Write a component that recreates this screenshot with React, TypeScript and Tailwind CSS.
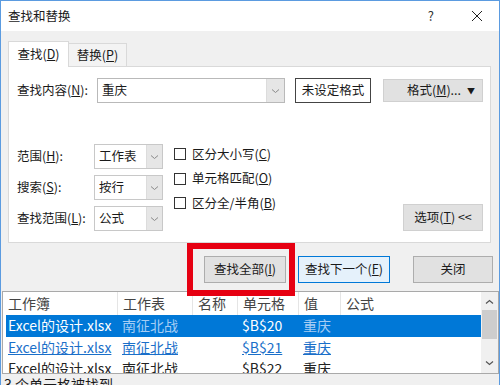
import React from 'react';

const font = "font-['Microsoft_YaHei','Noto_Sans_CJK_SC',sans-serif]";

function Chevron({ className = '' }: { className?: string }) {
  return (
    <svg width="9" height="6" viewBox="0 0 9 6" className={className}>
      <path d="M1 1.5 L4.5 4.5 L8 1.5" fill="none" stroke="#8a8a8a" strokeWidth="1" />
    </svg>
  );
}

function Select({ value }: { value: string }) {
  return (
    <div className="flex h-[25px] w-[69px] border border-[#c8c8c8] bg-white">
      <div className="flex flex-1 items-center pl-[4px] text-[12.5px]">{value}</div>
      <div className="flex w-[16px] items-center justify-center border-l border-[#dcdcdc] bg-[#e6e6e6]">
        <Chevron />
      </div>
    </div>
  );
}

function Check({ children }: { children: React.ReactNode }) {
  return (
    <div className="flex h-[24.5px] items-center gap-[6px]">
      <div className="h-[12px] w-[12px] border border-[#333] bg-white" />
      <span className="text-[12.5px]">{children}</span>
    </div>
  );
}

const rows = [
  { file: 'Excel的设计.xlsx', sheet: '南征北战', cell: '$B$20', value: '重庆', kind: 'sel' },
  { file: 'Excel的设计.xlsx', sheet: '南征北战', cell: '$B$21', value: '重庆', kind: 'link' },
  { file: 'Excel的设计.xlsx', sheet: '南征北战', cell: '$B$22', value: '重庆', kind: 'plain' },
];

const cols = 'grid grid-cols-[111px_75px_45px_61px_42px_1fr]';

export default function App() {
  return (
    <div className={`relative flex h-[385px] w-[500px] flex-col overflow-hidden border-x border-t border-[#5b9be0] bg-[#f0f0f0] text-[#1a1a1a] ${font}`}>
      {/* Title bar */}
      <div className="flex h-[30px] shrink-0 items-center bg-white pl-[7px]">
        <span className="text-[12.5px]">查找和替换</span>
        <span className="ml-auto text-[13px] text-[#333]">?</span>
        <svg width="12" height="12" viewBox="0 0 12 12" className="ml-[37px] mr-[16px]">
          <path d="M1 1 L11 11 M11 1 L1 11" stroke="#222" strokeWidth="1" />
        </svg>
      </div>

      {/* Tabs */}
      <div className="flex shrink-0 items-end pl-[7px] pt-[10px]">
        <div className="relative z-10 -mb-px flex h-[26px] w-[61px] items-center justify-center border-x border-t border-[#d9d9d9] bg-white text-[12.5px]">
          查找(<u>D</u>)
        </div>
        <div className="flex h-[23px] w-[58px] items-center justify-center border-r border-t border-[#d9d9d9] bg-[#f3f3f3] text-[12.5px]">
          替换(<u>P</u>)
        </div>
      </div>

      {/* Panel */}
      <div className="ml-[7px] mr-[8px] flex h-[177px] shrink-0 flex-col border border-[#d9d9d9] bg-white pl-[8px] pr-[7px]">
        <div className="mt-[11px] flex items-center">
          <span className="w-[80px] text-[12.5px]">查找内容(<u>N</u>):</span>
          <div className="flex h-[25px] w-[188px] border border-[#b9b9b9] bg-white">
            <div className="flex flex-1 items-center pl-[4px] text-[12.5px]">重庆</div>
            <div className="flex w-[18px] items-center justify-center border-l border-[#dcdcdc] bg-[#e6e6e6]">
              <Chevron />
            </div>
          </div>
          <div className="ml-[10px] flex h-[25px] w-[76px] items-center justify-center border border-[#444] bg-white text-[12.5px]">
            未设定格式
          </div>
          <div className="ml-auto flex h-[23px] w-[100px] items-center border border-[#d0d0d0] bg-[#e1e1e1] pl-[23px] pr-[7px] text-[12.5px]">
            <span>格式(<u>M</u>)...</span>
            <span className="ml-auto text-[8px]">▼</span>
          </div>
        </div>

        <div className="mt-[41px] flex items-end">
          <div className="flex flex-col gap-[6px]">
            {[
              ['范围', 'H', '工作表'],
              ['搜索', 'S', '按行'],
              ['查找范围', 'L', '公式'],
            ].map(([label, key, val]) => (
              <div key={key} className="flex items-center">
                <span className="w-[77px] text-[12.5px]">
                  {label}(<u>{key}</u>):
                </span>
                <Select value={val} />
              </div>
            ))}
          </div>
          <div className="mb-auto ml-[11px] -mt-[2px] flex flex-col">
            <Check>区分大小写(<u>C</u>)</Check>
            <Check>单元格匹配(<u>O</u>)</Check>
            <Check>区分全/半角(<u>B</u>)</Check>
          </div>
          <div className="ml-auto flex h-[27px] w-[80px] items-center justify-center border border-[#d0d0d0] bg-[#e1e1e1] text-[12.5px]">
            选项(<u>T</u>)&nbsp;&lt;&lt;
          </div>
        </div>
      </div>

      {/* Buttons */}
      <div className="mt-[13px] flex shrink-0 justify-end pr-[6px] text-[12.5px]">
        <div className="flex h-[27px] w-[82px] items-center justify-center border border-[#adadad] bg-[#e1e1e1]">
          查找全部(<u>I</u>)
        </div>
        <div className="ml-[12px] flex h-[27px] w-[92px] items-center justify-center border border-[#0078d7] bg-[#e5f1fb]">
          查找下一个(<u>F</u>)
        </div>
        <div className="ml-[23px] flex h-[27px] w-[80px] items-center justify-center border border-[#adadad] bg-[#e1e1e1]">
          关闭
        </div>
      </div>

      {/* Results list */}
      <div className="ml-[1px] mt-[8px] flex h-[83px] shrink-0 overflow-hidden border border-[#a9a9a9] bg-white">
        <div className="flex-1 overflow-hidden pl-[3px] text-[14px]">
          <div className={`${cols} h-[23px] items-center text-[#444]`}>
            {['工作簿', '工作表', '名称', '单元格', '值', '公式'].map((h, i) => (
              <div key={h} className={`${i === 0 ? 'pl-[2px]' : 'border-l border-[#e5e5e5] pl-[5px]'} leading-[23px]`}>
                {h}
              </div>
            ))}
          </div>
          {rows.map((r) => {
            const sel = r.kind === 'sel';
            const link = r.kind === 'link';
            const main = sel ? 'text-white' : link ? 'text-[#1a6fc9] underline' : 'text-[#222]';
            const sub = sel ? 'text-[#a6cdf4]' : link ? 'text-[#1a6fc9] underline' : 'text-[#222]';
            return (
              <div key={r.cell} className={`${cols} h-[21.5px] items-center ${sel ? 'bg-[#0078d7]' : ''}`}>
                <div className={`pl-[2px] ${main}`}>{r.file}</div>
                <div className={`pl-[5px] ${sub}`}>{r.sheet}</div>
                <div />
                <div className={`pl-[5px] ${main}`}>{r.cell}</div>
                <div className={`pl-[5px] ${sub}`}>{r.value}</div>
                <div />
              </div>
            );
          })}
        </div>
        <div className="flex w-[17px] shrink-0 flex-col items-center bg-[#f0f0f0]">
          <svg width="9" height="6" viewBox="0 0 9 6" className="mt-[7px]">
            <path d="M1 4.5 L4.5 1.5 L8 4.5" fill="none" stroke="#555" strokeWidth="1.2" />
          </svg>
          <div className="mt-[5px] h-[29px] w-[15px] bg-[#cdcdcd]" />
          <svg width="9" height="6" viewBox="0 0 9 6" className="mb-[7px] mt-auto">
            <path d="M1 1.5 L4.5 4.5 L8 1.5" fill="none" stroke="#555" strokeWidth="1.2" />
          </svg>
        </div>
      </div>

      {/* Status bar */}
      <div className="shrink-0 pl-[3px] pt-[1px] text-[14px] leading-[18px]">3 个单元格被找到</div>

      {/* Red highlight annotation */}
      <div className="pointer-events-none absolute left-[186px] top-[242px] h-[53px] w-[108px] border-[6px] border-[#e60012]" />
    </div>
  );
}
